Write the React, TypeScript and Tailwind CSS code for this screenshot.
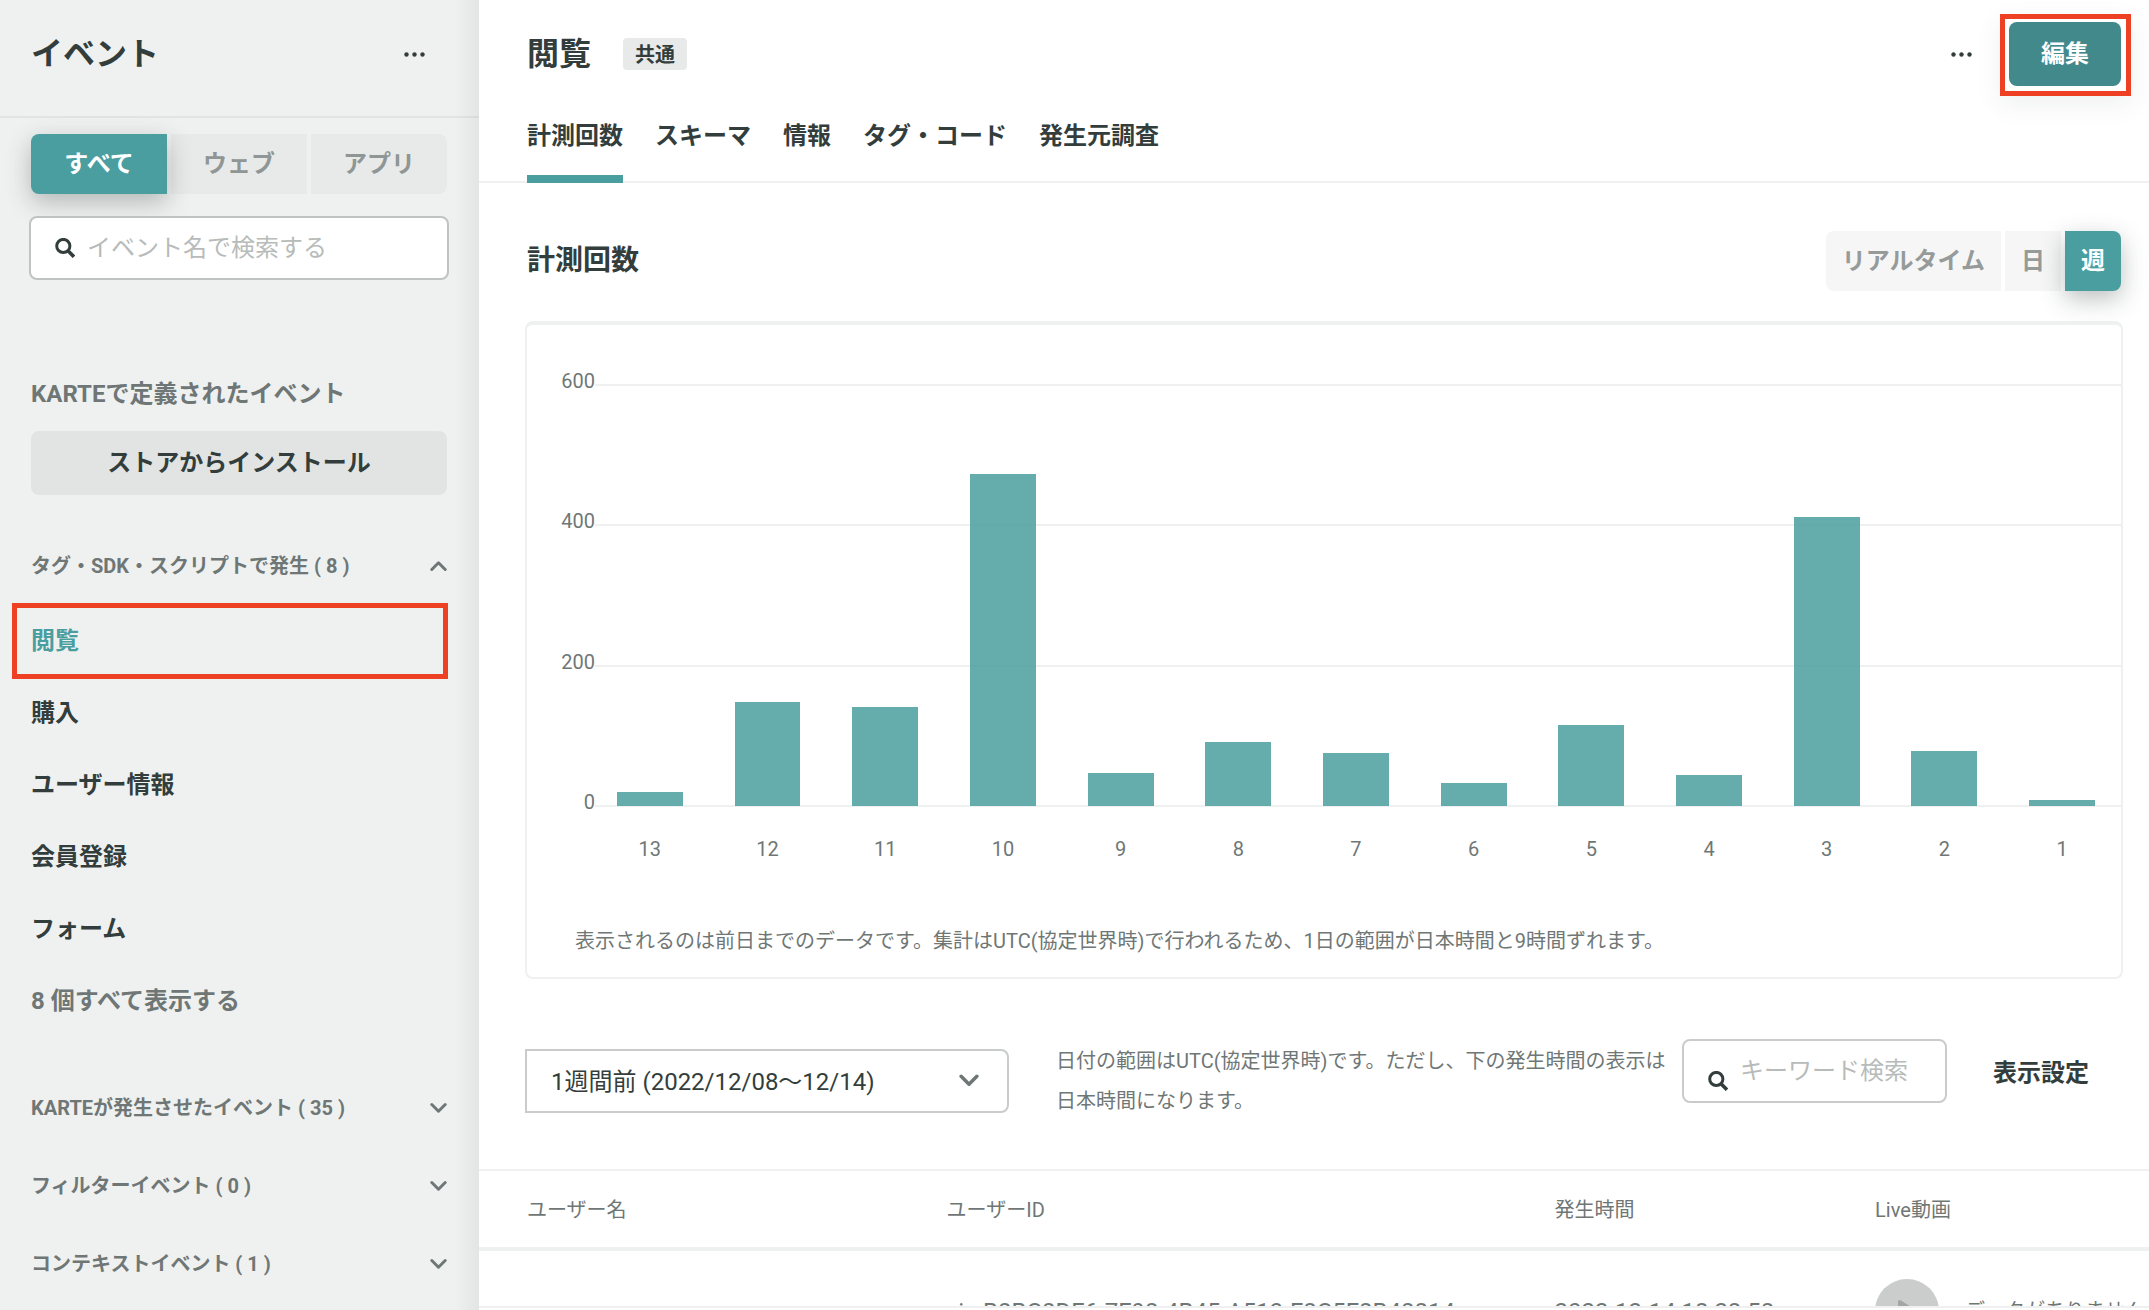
import { useState } from "react";

const events = ["閲覧", "購入", "ユーザー情報", "会員登録", "フォーム"];
const groups = ["KARTEが発生させたイベント ( 35 )", "フィルターイベント ( 0 )", "コンテキストイベント ( 1 )"];
const bars = [
  { label: 13, value: 20 },
  { label: 12, value: 148 },
  { label: 11, value: 141 },
  { label: 10, value: 473 },
  { label: 9, value: 47 },
  { label: 8, value: 91 },
  { label: 7, value: 75 },
  { label: 6, value: 33 },
  { label: 5, value: 115 },
  { label: 4, value: 44 },
  { label: 3, value: 412 },
  { label: 2, value: 79 },
  { label: 1, value: 9 },
];
const tabs = ["計測回数", "スキーマ", "情報", "タグ・コード", "発生元調査"];

function Dots() {
  return (
    <svg width="21" height="5" viewBox="0 0 21 5" fill="currentColor" aria-hidden="true">
      <circle cx="2.5" cy="2.5" r="2.2" />
      <circle cx="10.5" cy="2.5" r="2.2" />
      <circle cx="18.5" cy="2.5" r="2.2" />
    </svg>
  );
}

function Chevron({ up = false, size = 17 }: { up?: boolean; size?: number }) {
  return (
    <svg
      width={size}
      height={size}
      viewBox="0 0 17 17"
      fill="none"
      stroke="#6f7776"
      strokeWidth="3"
      strokeLinecap="round"
      strokeLinejoin="round"
      className="shrink-0"
      aria-hidden="true"
    >
      <path d={up ? "M1.8 11.500 8.500 4.800l6.700 6.700" : "M1.800 4.500l6.700 6.700 6.700-6.700"} />
    </svg>
  );
}

function Magnifier() {
  return (
    <svg width="20" height="20" viewBox="0 0 20 20" fill="none" stroke="#333e3c" className="shrink-0" aria-hidden="true">
      <circle cx="8.3" cy="8" r="6.6" strokeWidth="3" />
      <path d="M13 12.800 19 18.800" strokeWidth="3.600" />
    </svg>
  );
}

function Sidebar() {
  return (
    <aside className="relative w-[479px] shrink-0 overflow-hidden bg-[#eff1f0]">
      <div className="flex h-[118px] items-start justify-between border-b-2 border-[#e2e4e3] pr-[54px] pl-[31px]">
        <h1 className="mt-[34px] text-[32px] leading-10 font-bold">イベント</h1>
        <button type="button" aria-label="メニュー" className="mt-8 flex h-11 items-center">
          <Dots />
        </button>
      </div>

      <div className="pr-8 pl-[31px]">
        <div className="mt-4 grid h-[60px] grid-cols-3 gap-1 font-bold text-[#8f9695]">
          <button type="button" className="relative rounded-l-lg bg-[#4a9e9f] text-white shadow-[0_8px_24px_rgba(50,60,58,0.32)]">
            すべて
          </button>
          <button type="button" className="bg-[#e8eae9]">ウェブ</button>
          <button type="button" className="rounded-r-lg bg-[#e8eae9]">アプリ</button>
        </div>

        <label className="relative -mx-0.5 mt-[22px] flex h-16 items-center gap-3 rounded-lg border-2 border-[#bfc3c2] bg-white pl-6">
          <Magnifier />
          <input
            type="text"
            aria-label="イベント名で検索する"
            placeholder="イベント名で検索する"
            className="min-w-0 flex-1 outline-none placeholder:text-[#b7bbba]"
          />
        </label>

        <h2 className="mt-24 leading-9 font-bold text-[#6f7776]">KARTEで定義されたイベント</h2>
        <button type="button" className="mt-[19px] h-16 w-full rounded-lg bg-[#e2e4e3] font-bold">
          ストアからインストール
        </button>

        <button type="button" className="mt-[51px] flex h-10 w-full items-center justify-between text-xl font-bold text-[#6f7776]">
          タグ・SDK・スクリプトで発生 ( 8 )
          <Chevron up />
        </button>
      </div>

      <nav className="mt-[17px] flex flex-col font-bold">
        {events.map((name, i) =>
          i === 0 ? (
            <a key={name} href="#event" className="mr-[31px] ml-3 flex h-[76px] items-center border-5 border-[#ee4023] pl-[14px] text-[#4a9e9f]">
              {name}
            </a>
          ) : (
            <a key={name} href="#event" className={i === 1 ? "mt-[-2px] flex h-[72px] items-center px-[31px]" : "flex h-[72px] items-center px-[31px]"}>
              {name}
            </a>
          ),
        )}
        <button type="button" className="flex h-[72px] items-center px-[31px] text-[#6f7776]">
          8 個すべて表示する
        </button>
      </nav>

      <div className="mt-8 pr-8 pl-[31px]">
        {groups.map((name) => (
          <button key={name} type="button" className="flex h-[78px] w-full items-center justify-between text-xl font-bold text-[#6f7776]">
            {name}
            <Chevron />
          </button>
        ))}
      </div>
      <div className="pointer-events-none absolute inset-y-0 right-0 w-6 bg-linear-to-r from-transparent to-black/5" />
    </aside>
  );
}

function Chart() {
  return (
    <section className="mt-[30px] rounded-lg border-2 border-t-4 border-[#eff1f0] text-xl text-[#6f7776]">
      <div className="flex pt-[59px]">
        <div className="mt-px flex h-[421px] w-[68px] shrink-0 flex-col justify-between text-right">
          {[600, 400, 200, 0].map((n) => (
            <span key={n} className="-mt-4 h-4 leading-6">
              {n}
            </span>
          ))}
        </div>
        <div className="min-w-0 flex-1">
          <div className="relative h-[423px]">
            <div className="absolute inset-0 flex flex-col justify-between">
              {[600, 400, 200, 0].map((n) => (
                <div key={n} className="h-0.5 bg-[#eff1f0]" />
              ))}
            </div>
            <div className="relative -ml-1 flex h-full items-end py-px">
              {bars.map((b) => (
                <div key={b.label} className="flex h-full flex-1 items-end justify-center">
                  <div className="w-[56%] bg-[#4a9e9f]/85" style={{ height: `${b.value / 6}%` }} />
                </div>
              ))}
            </div>
          </div>
          <div className="mt-[26px] -ml-1 flex leading-8">
            {bars.map((b) => (
              <span key={b.label} className="flex-1 text-center">
                {b.label}
              </span>
            ))}
          </div>
        </div>
      </div>
      <p className="mt-14 mb-4 px-12 leading-10">
        表示されるのは前日までのデータです。集計はUTC(協定世界時)で行われるため、1日の範囲が日本時間と9時間ずれます。
      </p>
    </section>
  );
}

export default function App() {
  const [keyword, setKeyword] = useState("");
  return (
    <div className="flex h-screen overflow-hidden bg-white font-[Roboto,'Noto_Sans_CJK_JP',sans-serif] text-2xl text-[#333e3c]">
      <Sidebar />
      <main className="flex min-w-0 flex-1 flex-col overflow-hidden">
        <header className="shrink-0 border-b-2 border-[#eff1f0] pl-12">
          <div className="flex h-[110px] items-start pt-[14px] pr-[18px]">
            <h1 className="mt-5 text-[32px] leading-10 font-bold">閲覧</h1>
            <span className="mt-6 ml-8 flex h-8 w-16 items-center justify-center rounded-sm bg-[#e8eae9] pt-0.5 text-xl font-bold">共通</span>
            <button type="button" aria-label="その他" className="mt-[18px] mr-7 ml-auto flex h-11 items-center">
              <Dots />
            </button>
            <div className="border-5 border-[#ee4023] pt-[3px] pr-[5px] pb-[5px] pl-1 shadow-[0_8px_24px_rgba(50,60,58,0.08)]">
              <button type="button" className="h-16 w-28 rounded-lg bg-[#41898a] font-bold text-white">
                編集
              </button>
            </div>
          </div>
          <nav className="-mb-0.5 flex gap-8 font-bold">
            {tabs.map((t, i) => (
              <a
                key={t}
                href="#tab"
                className={i === 0 ? "h-[73px] border-b-8 border-[#4a9e9f] pt-2 leading-9" : "h-[73px] pt-2 leading-9"}
              >
                {t}
              </a>
            ))}
          </nav>
        </header>

        <div className="pt-12 pr-[26px] pl-[46px]">
          <div className="mr-0.5 ml-0.5 flex h-[60px] items-center justify-between">
            <h2 className="text-[28px] leading-10 font-bold">計測回数</h2>
            <div className="flex h-full gap-1 font-bold text-[#969b9a]">
              <button type="button" className="rounded-l-lg bg-[#f6f6f6] px-4">リアルタイム</button>
              <button type="button" className="bg-[#f6f6f6] px-4">日</button>
              <button type="button" className="rounded-r-lg bg-[#4a9e9f] px-4 text-white shadow-[0_8px_24px_rgba(50,60,58,0.32)]">週</button>
            </div>
          </div>

          <Chart />

          <div className="mt-[60px] flex items-start">
            <div className="relative mt-[10px] w-[484px] shrink-0">
              <select aria-label="期間" className="h-16 w-full appearance-none rounded-r-lg border-2 border-[#c9cccb] pt-0.5 pl-6">
                <option>1週間前 (2022/12/08〜12/14)</option>
              </select>
              <span className="pointer-events-none absolute inset-y-0 right-[30px] flex items-center">
                <Chevron size={20} />
              </span>
            </div>
            <p className="mt-0.5 ml-[47px] min-w-0 flex-1 text-xl leading-10 text-[#6f7776]">
              日付の範囲はUTC(協定世界時)です。ただし、下の発生時間の表示は日本時間になります。
            </p>
            <label className="ml-4 flex h-16 w-[265px] shrink-0 items-center gap-3 rounded-lg border-2 border-[#c9cccb] pl-6">
              <span className="pt-5">
                <Magnifier />
              </span>
              <input
                type="text"
                aria-label="キーワード検索"
                placeholder="キーワード検索"
                value={keyword}
                onChange={(e) => setKeyword(e.target.value)}
                className="min-w-0 flex-1 outline-none placeholder:text-[#b7bbba]"
              />
            </label>
            <button type="button" className="mr-0.5 ml-[14px] h-16 shrink-0 px-8 pt-1 font-bold">表示設定</button>
          </div>
        </div>

        <div className="mt-12 min-h-0 flex-1 overflow-hidden border-y-2 border-[#eff1f0]">
          <table className="w-full table-fixed text-left whitespace-nowrap">
            <colgroup>
              <col className="w-[28%]" />
              <col className="w-[36.4%]" />
              <col className="w-[19.2%]" />
              <col />
            </colgroup>
            <thead>
              <tr className="h-[78px] border-b-4 border-[#eff1f0] text-xl text-[#6f7776]">
                <th className="pt-0.5 pl-12 font-normal">ユーザー名</th>
                <th className="pt-0.5 font-normal">ユーザーID</th>
                <th className="pt-0.5 font-normal">発生時間</th>
                <th className="pt-0.5 font-normal">Live動画</th>
              </tr>
            </thead>
            <tbody>
              <tr className="h-[122px] text-[#6f7776]">
                <td />
                <td className="pt-0.5">vis-B8BC8DF6-7F98-4B45-A513-F8C5F8B48814</td>
                <td className="pt-0.5">2022-12-14 18:28:58</td>
                <td>
                  <span className="flex items-center gap-[26px]">
                    <button type="button" aria-label="再生" className="flex size-16 shrink-0 items-center justify-center rounded-full bg-[#cbcdcc]">
                      <svg width="20" height="24" viewBox="0 0 20 24" fill="#a3a6a5" aria-hidden="true">
                        <path d="M1 3Q1 0 4 1.500L18 10.500Q20 12 18 13.500L4 22.500Q1 24 1 21Z" />
                      </svg>
                    </button>
                    <span className="text-xl">データがありません</span>
                  </span>
                </td>
              </tr>
            </tbody>
          </table>
        </div>
        <div className="h-0.5 shrink-0" />
      </main>
    </div>
  );
}
